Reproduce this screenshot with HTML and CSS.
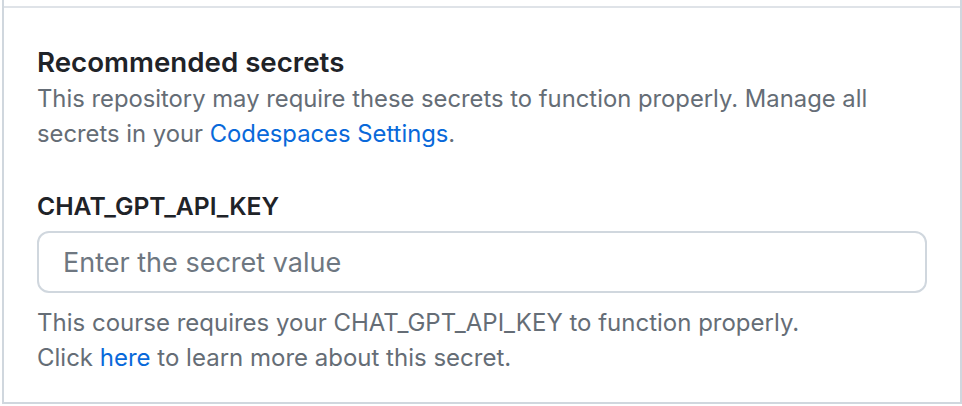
FILE: index.html
```html
<!DOCTYPE html>
<html lang="en">

<head>
  <meta charset="UTF-8">
  <title>Recommended secrets</title>
  <link rel="stylesheet" href="styles.css">
</head>

<body>
  <div id="secrets-box">
    <div class="box-top"></div>
    <div class="box-body">
      <h2>Recommended secrets</h2>
      <p class="note">This repository may require these secrets to function properly. Manage all secrets in your <a href="#">Codespaces Settings</a>.</p>

      <label for="chat-gpt-api-key">CHAT_GPT_API_KEY</label>
      <input type="text" id="chat-gpt-api-key" placeholder="Enter the secret value">
      <p class="note hint">This course requires your CHAT_GPT_API_KEY to function properly.<br>Click <a href="#">here</a> to learn more about this secret.</p>
    </div>
  </div>
</body>

</html>
```

FILE: styles.css
```css
body {
  margin: 0;
  background-color: #fff;
  color: #1f2328;
  font-family: 'Inter', 'Liberation Sans', Arial, sans-serif;
}

#secrets-box {
  margin-left: 2px;
  height: 404px;
  box-sizing: border-box;
  border: 2px solid #d0d7de;
  border-top: none;
}

.box-top {
  height: 6px;
  border-bottom: 2px solid #dfe3e8;
}

.box-body {
  padding: 38px 33px 0 33px;
}

h2 {
  font-size: 27.7px;
  font-weight: 600;
  margin: 0;
  line-height: 32px;
}

.note {
  color: #656d76;
  font-size: 23.8px;
  line-height: 35px;
  margin: 3px 0 0 0;
}

a {
  color: #0969da;
  text-decoration: none;
}

label {
  display: block;
  font-size: 24.7px;
  font-weight: 600;
  margin-top: 39px;
  line-height: 32px;
}

input {
  display: block;
  box-sizing: border-box;
  width: 100%;
  height: 62px;
  margin-top: 9px;
  padding: 0 24px;
  font-family: inherit;
  font-size: 27px;
  color: #1f2328;
  border: 2px solid #d0d7de;
  border-radius: 12px;
  outline: none;
}

input::placeholder {
  color: #6e7781;
}

.hint {
  margin-top: 12px;
  font-size: 24px;
}
```
